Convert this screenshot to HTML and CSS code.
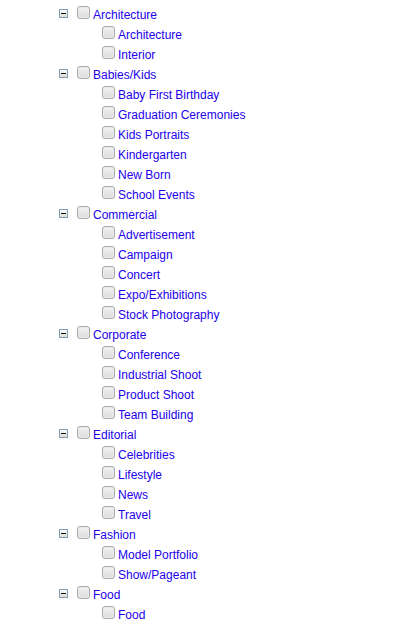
FILE: index.html
```html
<!DOCTYPE html>
<html>
<head>
<meta charset="utf-8">
<link rel="stylesheet" href="styles.css">
</head>
<body>
<div class="tree">
  <div class="group">
    <div class="row parent"><span class="exp"></span><span class="cb"></span><span class="label">Architecture</span></div>
    <div class="row child"><span class="cb"></span><span class="label">Architecture</span></div>
    <div class="row child"><span class="cb"></span><span class="label">Interior</span></div>
  </div>
  <div class="group">
    <div class="row parent"><span class="exp"></span><span class="cb"></span><span class="label">Babies/Kids</span></div>
    <div class="row child"><span class="cb"></span><span class="label">Baby First Birthday</span></div>
    <div class="row child"><span class="cb"></span><span class="label">Graduation Ceremonies</span></div>
    <div class="row child"><span class="cb"></span><span class="label">Kids Portraits</span></div>
    <div class="row child"><span class="cb"></span><span class="label">Kindergarten</span></div>
    <div class="row child"><span class="cb"></span><span class="label">New Born</span></div>
    <div class="row child"><span class="cb"></span><span class="label">School Events</span></div>
  </div>
  <div class="group">
    <div class="row parent"><span class="exp"></span><span class="cb"></span><span class="label">Commercial</span></div>
    <div class="row child"><span class="cb"></span><span class="label">Advertisement</span></div>
    <div class="row child"><span class="cb"></span><span class="label">Campaign</span></div>
    <div class="row child"><span class="cb"></span><span class="label">Concert</span></div>
    <div class="row child"><span class="cb"></span><span class="label">Expo/Exhibitions</span></div>
    <div class="row child"><span class="cb"></span><span class="label">Stock Photography</span></div>
  </div>
  <div class="group">
    <div class="row parent"><span class="exp"></span><span class="cb"></span><span class="label">Corporate</span></div>
    <div class="row child"><span class="cb"></span><span class="label">Conference</span></div>
    <div class="row child"><span class="cb"></span><span class="label">Industrial Shoot</span></div>
    <div class="row child"><span class="cb"></span><span class="label">Product Shoot</span></div>
    <div class="row child"><span class="cb"></span><span class="label">Team Building</span></div>
  </div>
  <div class="group">
    <div class="row parent"><span class="exp"></span><span class="cb"></span><span class="label">Editorial</span></div>
    <div class="row child"><span class="cb"></span><span class="label">Celebrities</span></div>
    <div class="row child"><span class="cb"></span><span class="label">Lifestyle</span></div>
    <div class="row child"><span class="cb"></span><span class="label">News</span></div>
    <div class="row child"><span class="cb"></span><span class="label">Travel</span></div>
  </div>
  <div class="group">
    <div class="row parent"><span class="exp"></span><span class="cb"></span><span class="label">Fashion</span></div>
    <div class="row child"><span class="cb"></span><span class="label">Model Portfolio</span></div>
    <div class="row child"><span class="cb"></span><span class="label">Show/Pageant</span></div>
  </div>
  <div class="group">
    <div class="row parent"><span class="exp"></span><span class="cb"></span><span class="label">Food</span></div>
    <div class="row child"><span class="cb"></span><span class="label">Food</span></div>
  </div>
</div>
</body>
</html>
```

FILE: styles.css
```css
html, body {
  margin: 0;
  padding: 0;
  background: #ffffff;
}
body {
  font-family: "Liberation Sans", Arial, sans-serif;
  font-size: 12px;
}
.tree {
  padding-top: 5px;
  display: flex;
  flex-direction: column;
}
.row {
  height: 20px;
  display: flex;
  align-items: center;
}
.parent {
  padding-left: 59px;
}
.child {
  padding-left: 102px;
}
.exp {
  width: 7px;
  height: 7px;
  border: 1px solid #7f9db9;
  background: linear-gradient(#ffffff, #dcdcd4);
  margin-right: 9px;
  margin-top: -3px;
  display: flex;
  align-items: center;
  justify-content: center;
}
.exp::before {
  content: "";
  width: 5px;
  height: 1px;
  background: #000000;
}
.cb {
  box-sizing: border-box;
  width: 13px;
  height: 13px;
  border: 1px solid #a9a9a9;
  border-radius: 3px;
  background: linear-gradient(#f2f2f2, #dcdcdc);
  box-shadow: inset 0 0 0 1px #ececec;
  margin-right: 3px;
  margin-top: -5px;
}
.label {
  color: #2200ee;
  line-height: 20px;
}
```
